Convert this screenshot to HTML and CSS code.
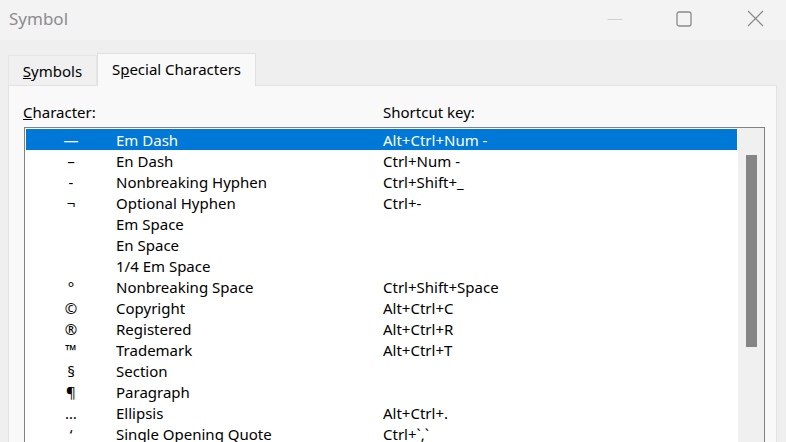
FILE: index.html
```html
<!DOCTYPE html>
<html>
<head>
<meta charset="utf-8">
<link rel="stylesheet" href="styles.css">
</head>
<body>
<div class="window">
  <div class="titlebar">
    <div class="title">Symbol</div>
    <div class="controls">
      <span class="ctl min"><svg width="16" height="16" viewBox="0 0 16 16"><line x1="0.5" y1="8.5" x2="15.5" y2="8.5" stroke="#d0d0d0" stroke-width="1"/></svg></span>
      <span class="ctl max"><svg width="16" height="16" viewBox="0 0 16 16"><rect x="1" y="1" width="14" height="14" rx="2" fill="none" stroke="#8a8a8a" stroke-width="1.3"/></svg></span>
      <span class="ctl close"><svg width="17" height="17" viewBox="0 0 17 17"><path d="M1 1 L16 16 M16 1 L1 16" stroke="#8a8a8a" stroke-width="1.2" fill="none"/></svg></span>
    </div>
  </div>
  <div class="tabs">
    <div class="tab"><span class="ul">S</span>ymbols</div>
    <div class="tab active">S<span class="ul">p</span>ecial Characters</div>
  </div>
  <div class="panel">
    <div class="labels">
      <div class="lab-char"><span class="ul">C</span>haracter:</div>
      <div class="lab-key">Shortcut key:</div>
    </div>
    <div class="listbox">
      <div class="rows">
        <div class="row selected"><span class="c">—</span><span class="n">Em Dash</span><span class="k">Alt+Ctrl+Num -</span></div>
        <div class="row"><span class="c">–</span><span class="n">En Dash</span><span class="k">Ctrl+Num -</span></div>
        <div class="row"><span class="c">-</span><span class="n">Nonbreaking Hyphen</span><span class="k">Ctrl+Shift+_</span></div>
        <div class="row"><span class="c">¬</span><span class="n">Optional Hyphen</span><span class="k">Ctrl+-</span></div>
        <div class="row"><span class="c"></span><span class="n">Em Space</span><span class="k"></span></div>
        <div class="row"><span class="c"></span><span class="n">En Space</span><span class="k"></span></div>
        <div class="row"><span class="c"></span><span class="n">1/4 Em Space</span><span class="k"></span></div>
        <div class="row"><span class="c">°</span><span class="n">Nonbreaking Space</span><span class="k">Ctrl+Shift+Space</span></div>
        <div class="row"><span class="c">©</span><span class="n">Copyright</span><span class="k">Alt+Ctrl+C</span></div>
        <div class="row"><span class="c">®</span><span class="n">Registered</span><span class="k">Alt+Ctrl+R</span></div>
        <div class="row"><span class="c">™</span><span class="n">Trademark</span><span class="k">Alt+Ctrl+T</span></div>
        <div class="row"><span class="c">§</span><span class="n">Section</span><span class="k"></span></div>
        <div class="row"><span class="c">¶</span><span class="n">Paragraph</span><span class="k"></span></div>
        <div class="row"><span class="c">…</span><span class="n">Ellipsis</span><span class="k">Alt+Ctrl+.</span></div>
        <div class="row"><span class="c">‘</span><span class="n">Single Opening Quote</span><span class="k">Ctrl+`,`</span></div>
      </div>
      <div class="scrollbar"><div class="thumb"></div></div>
    </div>
  </div>
</div>
</body>
</html>
```
FILE: styles.css
```css
html, body {
  margin: 0;
  padding: 0;
  height: 100%;
  overflow: hidden;
}
body {
  background: #efefef;
  font-family: "Noto Sans", "Open Sans", sans-serif;
  font-size: 15px;
  color: #000;
}
.window {
  display: flex;
  flex-direction: column;
  height: 442px;
}
.titlebar {
  height: 40px;
  flex: none;
  background: #f3f3f3;
  display: flex;
  align-items: center;
  justify-content: space-between;
}
.title {
  padding-left: 9px;
  font-size: 17px;
  color: #8c8c8c;
  margin-top: -3px;
}
.controls {
  display: flex;
  align-items: center;
  margin-top: -3px;
}
.ctl {
  display: flex;
  align-items: center;
  justify-content: center;
}
.ctl svg { display: block; }
.min { margin-right: 53px; }
.max { margin-right: 55px; }
.close { margin-right: 22px; }
.tabs {
  flex: none;
  display: flex;
  align-items: flex-end;
  padding-left: 8px;
  margin-top: 12px;
  height: 33px;
}
.tab {
  height: 30px;
  box-sizing: border-box;
  display: flex;
  align-items: center;
  background: #f0f0f0;
  border: 1px solid #e6e6e6;
  border-bottom: none;
  width: 89px;
  justify-content: center;
}
.tab.active {
  height: 33px;
  width: 159px;
  background: #f9f9f9;
  border-color: #e0e0e0;
  margin-bottom: -1px;
  position: relative;
  z-index: 1;
  padding-bottom: 2px;
}
.ul { text-decoration: underline; text-underline-offset: 1px; text-decoration-thickness: 1px; }
.panel {
  flex: 1;
  margin: 0 8px 0 8px;
  width: 769px;
  box-sizing: border-box;
  background: #f9f9f9;
  border: 1px solid #e3e3e3;
  border-bottom: none;
  display: flex;
  flex-direction: column;
}
.labels {
  display: flex;
  height: 41px;
  align-items: center;
  padding-top: 11px;
  box-sizing: border-box;
}
.lab-char {
  padding-left: 14px;
  width: 360px;
}
.listbox {
  margin-left: 15px;
  width: 741px;
  flex: 1;
  box-sizing: border-box;
  border: 1px solid #828282;
  border-bottom: none;
  background: #fff;
  display: flex;
  padding: 1px 0 0 1px;
}
.rows {
  width: 711px;
}
.row {
  display: grid;
  grid-template-columns: 90px 267px 1fr;
  height: 21px;
  align-items: center;
  white-space: nowrap;
}
.row.selected {
  background: #0078d7;
  color: #fff;
}
.c { text-align: center; }
.scrollbar {
  margin-top: -1px;
  margin-left: 1px;
  width: 26px;
  background: #f0f0f0;
  box-sizing: border-box;
  padding-top: 27px;
  display: flex;
  justify-content: center;
}
.thumb {
  width: 11px;
  height: 192px;
  background: #858585;
}
```
